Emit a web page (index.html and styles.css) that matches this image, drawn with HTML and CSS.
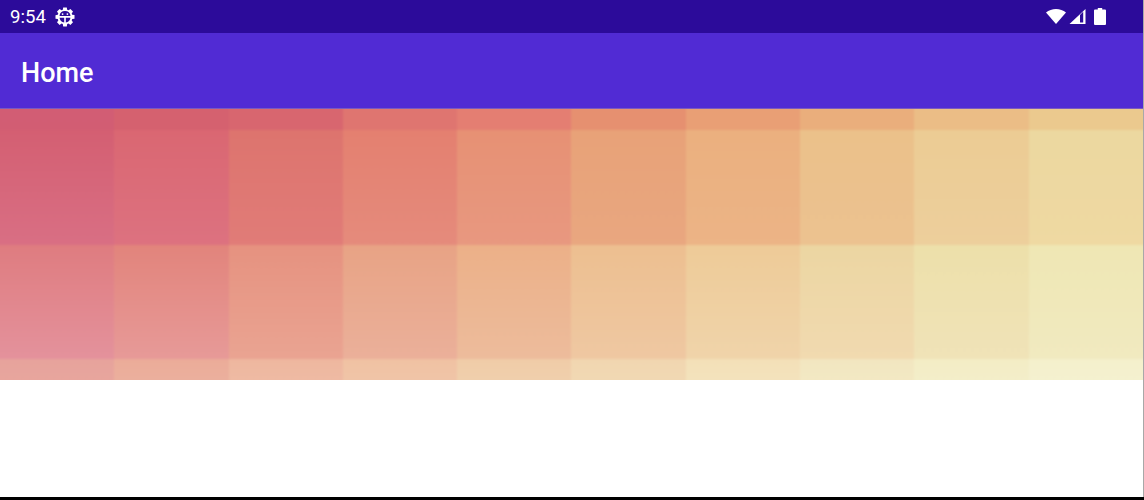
FILE: index.html
```html
<!DOCTYPE html>
<html>
  <head>
    <meta charset="UTF-8">
    <title>Home</title>
    <link rel="stylesheet" href="styles.css">
  </head>
  <body>
    <div id="pantalla">
      <div class="status-bar">
        <div class="status-left">
          <span class="hora">9:54</span>
          <svg class="icono-debug" width="20" height="20" viewBox="0 0 20 20">
            <path fill="#fff" fill-rule="evenodd" d="M8.200.4h3.600l.4 2.300 1.300.5 1.900-1.300 2.600 2.600-1.300 1.900.5 1.300 2.300.4v3.600l-2.300.4-.5 1.300 1.300 1.900-2.600 2.600-1.900-1.300-1.300.5-.4 2.300H8.200l-.4-2.300-1.300-.5-1.900 1.300-2.600-2.600 1.300-1.900-.5-1.300-2.300-.4V8.200l2.300-.4.5-1.300-1.300-1.900 2.600-2.600 1.900 1.300 1.300-.5zM10 4.100A5.600 5.600 0 0 0 4.500 9.100h11A5.600 5.600 0 0 0 10 4.100zM4.500 10.800a5.600 5.600 0 0 0 4.700 4.700v-4.700zm6.300 0v4.700a5.600 5.600 0 0 0 4.700-4.700zM7.600 6.200a.9.9 0 1 0 0 1.800.9.9 0 0 0 0-1.800zm4.800 0a.9.9 0 1 0 0 1.800.9.9 0 0 0 0-1.800z"/>
          </svg>
        </div>
        <div class="status-right">
          <svg class="icono-wifi" width="20" height="15" viewBox="0 0 20 15">
            <path fill="#fff" d="M10 15 0 3.600C2.800 1.300 6.200 0 10 0s7.200 1.300 10 3.600z"/>
          </svg>
          <svg class="icono-senal" width="17" height="15" viewBox="0 0 17 15">
            <path fill="#fff" fill-rule="evenodd" d="M16.500 0V15H.500zM14.200 2.800 11 6v7.500h3.200z"/>
          </svg>
          <svg class="icono-bateria" width="12" height="17" viewBox="0 0 12 17">
            <path fill="#fff" d="M3.800 0h4.400v1.500h2.800a1 1 0 0 1 1 1V16a1 1 0 0 1-1 1H1a1 1 0 0 1-1-1V2.500a1 1 0 0 1 1-1h2.800z"/>
          </svg>
        </div>
      </div>
      <div class="app-bar">Home</div>
      <div class="mosaico">
        <div class="columnas">
          <div class="columna col-1"><div class="fila-a"></div><div class="fila-b"></div><div class="fila-c"></div><div class="fila-d"></div></div>
          <div class="columna col-2"><div class="fila-a"></div><div class="fila-b"></div><div class="fila-c"></div><div class="fila-d"></div></div>
          <div class="columna col-3"><div class="fila-a"></div><div class="fila-b"></div><div class="fila-c"></div><div class="fila-d"></div></div>
          <div class="columna col-4"><div class="fila-a"></div><div class="fila-b"></div><div class="fila-c"></div><div class="fila-d"></div></div>
          <div class="columna col-5"><div class="fila-a"></div><div class="fila-b"></div><div class="fila-c"></div><div class="fila-d"></div></div>
          <div class="columna col-6"><div class="fila-a"></div><div class="fila-b"></div><div class="fila-c"></div><div class="fila-d"></div></div>
          <div class="columna col-7"><div class="fila-a"></div><div class="fila-b"></div><div class="fila-c"></div><div class="fila-d"></div></div>
          <div class="columna col-8"><div class="fila-a"></div><div class="fila-b"></div><div class="fila-c"></div><div class="fila-d"></div></div>
          <div class="columna col-9"><div class="fila-a"></div><div class="fila-b"></div><div class="fila-c"></div><div class="fila-d"></div></div>
          <div class="columna col-10"><div class="fila-a"></div><div class="fila-b"></div><div class="fila-c"></div><div class="fila-d"></div></div>
        </div>
      </div>
      <div class="contenido"></div>
    </div>
  </body>
</html>
```

FILE: styles.css
```css
html, body {
  margin: 0;
  height: 100%;
  background-color: #000;
}

#pantalla {
  width: 1143px;
  height: 497px;
  display: flex;
  flex-direction: column;
  background-color: #fff;
  border-right: 1px solid #a8a8a8;
  font-family: Roboto, "Liberation Sans", sans-serif;
  color: #fff;
}

.status-bar {
  height: 33px;
  flex: none;
  display: flex;
  justify-content: space-between;
  align-items: center;
  background-color: #2c0b9a;
  padding: 0 37px 0 10px;
}

.status-left {
  display: flex;
  align-items: center;
  gap: 9px;
}

.hora {
  font-size: 18.6px;
}

.icono-debug {
  margin-top: 1px;
}

.status-right {
  display: flex;
  align-items: center;
}

.icono-senal {
  margin-left: 3px;
}

.icono-bateria {
  margin-left: 8px;
}

.app-bar {
  height: 76px;
  flex: none;
  display: flex;
  align-items: center;
  padding: 4px 0 0 21px;
  box-sizing: border-box;
  background-color: #512bd4;
  border-bottom: 1px solid #7a5ac0;
  font-size: 27px;
  font-weight: 500;
}

.mosaico {
  height: 271px;
  flex: none;
  overflow: hidden;
}

.columnas {
  display: grid;
  grid-template-columns: 118.3px repeat(8, 114.3px) 118.3px;
  margin: -4px;
  height: 279px;
  filter: blur(1px);
}

.columna {
  display: flex;
  flex-direction: column;
}

.fila-a {
  height: 25px;
  background: linear-gradient(var(--a1), var(--a2));
}

.fila-b {
  height: 115px;
  background: linear-gradient(var(--b1), var(--b2));
}

.fila-c {
  height: 114px;
  background: linear-gradient(var(--c1), var(--c2));
}

.fila-d {
  height: 25px;
  background: linear-gradient(var(--d1), var(--d2));
}

.col-1 { --a1: #d25d75; --a2: #d25d73; --b1: #d45f72; --b2: #d96f84; --c1: #df7c80; --c2: #e4929c; --d1: #e7a39c; --d2: #e8a69e; }
.col-2 { --a1: #d5616f; --a2: #d5616f; --b1: #da6772; --b2: #dd7280; --c1: #e2847c; --c2: #e79a98; --d1: #ebac99; --d2: #ebb09e; }
.col-3 { --a1: #d8666f; --a2: #d8666f; --b1: #dd746e; --b2: #e17c78; --c1: #e69280; --c2: #eaa492; --d1: #eeb79f; --d2: #efbba4; }
.col-4 { --a1: #df7570; --a2: #df7570; --b1: #e48070; --b2: #e58b7c; --c1: #e8a385; --c2: #ebb09a; --d1: #f0c2a3; --d2: #f0c5a8; }
.col-5 { --a1: #e47e72; --a2: #e47e72; --b1: #e79174; --b2: #e89880; --c1: #ecb088; --c2: #edbc9c; --d1: #f0cca8; --d2: #f0d0ad; }
.col-6 { --a1: #e69070; --a2: #e69070; --b1: #e8a278; --b2: #e9a780; --c1: #edbf90; --c2: #efc8a2; --d1: #f1d6b0; --d2: #f1d9b4; }
.col-7 { --a1: #e99f75; --a2: #e99f75; --b1: #ebb07f; --b2: #ecb486; --c1: #eecb98; --c2: #f0d4aa; --d1: #f3e0b8; --d2: #f3e3bd; }
.col-8 { --a1: #eaae7c; --a2: #eaae7c; --b1: #ebc18a; --b2: #ecc290; --c1: #ecd6a2; --c2: #f1dab0; --d1: #f2e6c0; --d2: #f3e9c4; }
.col-9 { --a1: #ebbd86; --a2: #ebbd86; --b1: #eccc94; --b2: #edcf9c; --c1: #ede0aa; --c2: #f0e3b8; --d1: #f3edc5; --d2: #f3eeca; }
.col-10 { --a1: #ebc98e; --a2: #ebc98e; --b1: #ecd8a0; --b2: #efd9a2; --c1: #efe7b4; --c2: #f1eac0; --d1: #f4f0cc; --d2: #f4f1d0; }

.contenido {
  flex: 1;
}
```
